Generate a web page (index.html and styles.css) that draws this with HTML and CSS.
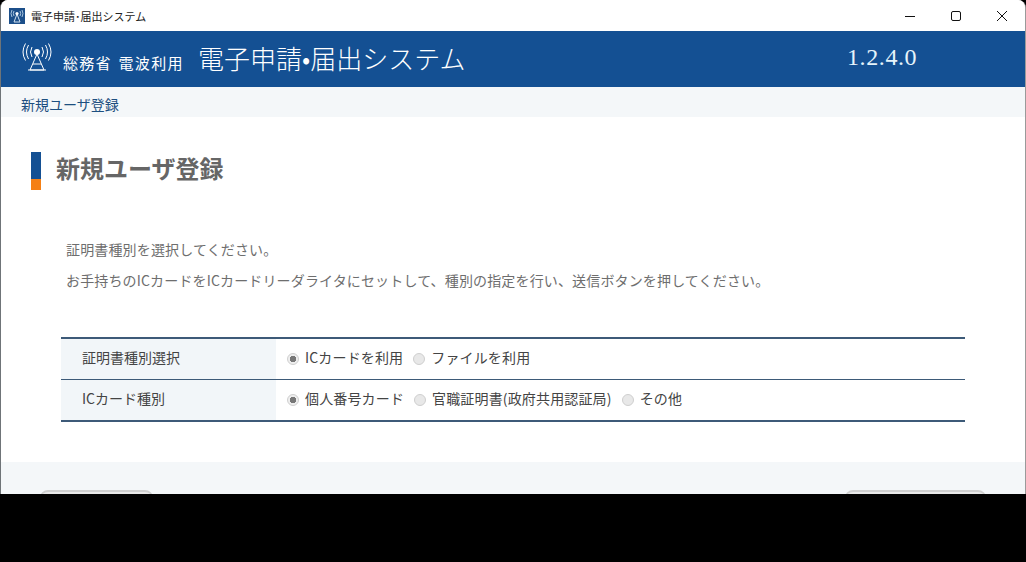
FILE: index.html
```html
<!DOCTYPE html>
<html lang="ja">
<head>
  <meta charset="UTF-8" />
  <title>電子申請・届出システム</title>
  <link rel="stylesheet" href="styles.css">
</head>
<body>
  <div class="window">
    <div class="titlebar">
      <svg class="app-icon" viewBox="0 0 16 16">
        <rect width="16" height="16" fill="#1c4f8a"/>
        <path d="M8 6 L5 14 H11 Z" fill="none" stroke="#cfe0ee" stroke-width="1"/>
        <circle cx="8" cy="5.5" r="1.6" fill="#fff"/>
        <path d="M5 3 Q3.6 5.5 5 8 M11 3 Q12.4 5.5 11 8 M3 2 Q1 5.5 3 9 M13 2 Q15 5.5 13 9" fill="none" stroke="#a9c6e0" stroke-width="1"/>
      </svg>
      <span class="app-name">電子申請･届出システム</span>
      <div class="win-controls">
        <svg class="win-btn" viewBox="0 0 46 30"><path d="M18 15.5 H28" stroke="#111" fill="none"/></svg>
        <svg class="win-btn" viewBox="0 0 46 30"><rect x="18.5" y="10.5" width="9" height="9" rx="1.5" stroke="#111" fill="none"/></svg>
        <svg class="win-btn" viewBox="0 0 46 30"><path d="M18 10 L28 20 M28 10 L18 20" stroke="#111" fill="none"/></svg>
      </div>
    </div>

    <header class="app-header">
      <div class="brand">
        <svg class="brand-icon" viewBox="0 0 30 32">
          <circle cx="15" cy="10" r="3" fill="#fff"/>
          <path d="M15 12 L8 28 H22 Z M11 22 H19 M6 28 H24" fill="none" stroke="#fff" stroke-width="1"/>
          <path d="M10 5 Q7 10 10 15 M20 5 Q23 10 20 15 M6.5 3 Q2.5 10 6.5 17 M23.5 3 Q27.5 10 23.5 17 M3.5 1.5 Q-1.5 10 3.5 18.5 M26.5 1.5 Q31.5 10 26.5 18.5" fill="none" stroke="#fff" stroke-width="1"/>
        </svg>
        <span class="brand-sub">総務省 電波利用</span>
        <span class="brand-title">電子申請•届出システム</span>
      </div>
      <span class="version">1.2.4.0</span>
    </header>

    <nav class="breadcrumb">新規ユーザ登録</nav>

    <main class="content">
      <h1 class="page-title">新規ユーザ登録</h1>
      <div class="lead">
        <p>証明書種別を選択してください。</p>
        <p>お手持ちのICカードをICカードリーダライタにセットして、種別の指定を行い、送信ボタンを押してください。</p>
      </div>
      <div class="form-table">
        <div class="form-row">
          <div class="form-label">証明書種別選択</div>
          <div class="form-value">
            <span class="radio checked"></span><span class="option">ICカードを利用</span>
            <span class="radio"></span><span class="option">ファイルを利用</span>
          </div>
        </div>
        <div class="form-row">
          <div class="form-label">ICカード種別</div>
          <div class="form-value">
            <span class="radio checked"></span><span class="option">個人番号カード</span>
            <span class="radio"></span><span class="option">官職証明書(政府共用認証局)</span>
            <span class="radio"></span><span class="option">その他</span>
          </div>
        </div>
      </div>
    </main>

    <footer class="actions">
      <button class="btn btn-left"></button>
      <button class="btn btn-right"></button>
    </footer>
  </div>
</body>
</html>
```

FILE: styles.css
```css
html, body {
  margin: 0;
  padding: 0;
  height: 562px;
  overflow: hidden;
  background: #000;
  font-family: "Noto Sans CJK JP", "Noto Sans", sans-serif;
}

.window {
  width: 1026px;
  height: 494px;
  box-sizing: border-box;
  border-left: 1px solid #6f7478;
  border-right: 1px solid #9a9a9a;
  border-radius: 8px 8px 0 0;
  background: #fff;
  overflow: hidden;
  display: flex;
  flex-direction: column;
}

.titlebar {
  height: 31px;
  flex: none;
  display: flex;
  align-items: center;
  padding-left: 8px;
  background: #fff;
}

.app-icon {
  width: 16px;
  height: 16px;
}

.app-name {
  margin-left: 6px;
  font-size: 11px;
  color: #222;
}

.win-controls {
  margin-left: auto;
  display: flex;
}

.win-btn {
  width: 46px;
  height: 30px;
}

.app-header {
  height: 56px;
  flex: none;
  background: #145093;
  color: #fff;
  display: flex;
  align-items: center;
  padding-left: 21px;
}

.brand {
  display: flex;
  align-items: center;
  width: 825px;
}

.brand-icon {
  width: 30px;
  height: 32px;
  margin-top: -2px;
}

.brand-sub {
  margin-left: 11px;
  margin-top: 6px;
  font-size: 15px;
  letter-spacing: 1.3px;
  word-spacing: 2px;
  width: 135px;
  white-space: nowrap;
}

.brand-title {
  font-size: 26px;
  font-weight: 300;
  white-space: nowrap;
  margin-top: -3px;
}

.version {
  font-family: "Liberation Serif", serif;
  font-size: 24px;
  color: #e6f4fb;
  letter-spacing: 0.6px;
  margin-top: -3px;
}

.breadcrumb {
  height: 30px;
  flex: none;
  box-sizing: border-box;
  padding: 7px 0 0 20px;
  background: #f4f7f9;
  font-size: 14px;
  line-height: 20px;
  color: #1d4f80;
}

.content {
  flex: 1;
  padding: 35px 60px 0 30px;
}

.page-title {
  margin: 0;
  height: 38px;
  box-sizing: border-box;
  padding-left: 25px;
  font-size: 24px;
  line-height: 31px;
  font-weight: 700;
  color: #666;
  background: linear-gradient(#145093 0, #145093 27px, #f58015 27px, #f58015 38px) no-repeat left top / 10px 38px;
}

.lead {
  margin: 50px 0 0 35px;
  font-size: 14px;
  letter-spacing: 0.15px;
  color: #6e6e6e;
}

.lead p {
  margin: 0 0 12px;
  line-height: 19px;
}

.form-table {
  margin: 47px 0 0 30px;
  width: 904px;
  border-top: 2px solid #3d5a78;
  border-bottom: 2px solid #3d5a78;
}

.form-row {
  display: flex;
  height: 40px;
}

.form-row + .form-row {
  border-top: 1px solid #3d5a78;
}

.form-label {
  width: 215px;
  box-sizing: border-box;
  padding-left: 21px;
  background: #f2f6f9;
  font-size: 14px;
  line-height: 36px;
  color: #444;
}

.form-value {
  flex: 1;
  display: flex;
  align-items: center;
  padding-left: 11px;
  font-size: 14px;
  letter-spacing: 0.15px;
  color: #444;
}

.form-value .option {
  margin-top: -4px;
}

.radio {
  width: 12px;
  height: 12px;
  box-sizing: border-box;
  border: 1px solid #cfcfcf;
  border-radius: 50%;
  background: #e8e8e8;
  margin-right: 6px;
}

.radio.checked {
  background: radial-gradient(circle, #777 0, #777 3px, #eee 3.5px);
}

.option {
  margin-right: 10px;
  white-space: nowrap;
}

.actions {
  height: 32px;
  flex: none;
  background: #f4f7f9;
  display: flex;
  justify-content: space-between;
  padding: 28px 39px 0 39px;
  box-sizing: border-box;
}

.btn {
  height: 20px;
  padding: 0;
  border: 1px solid #c8c8c8;
  border-top: 2px solid #cfcfcf;
  border-radius: 8px;
  background: #e9e9e9;
}

.btn-left {
  width: 113px;
}

.btn-right {
  width: 141px;
}
```
